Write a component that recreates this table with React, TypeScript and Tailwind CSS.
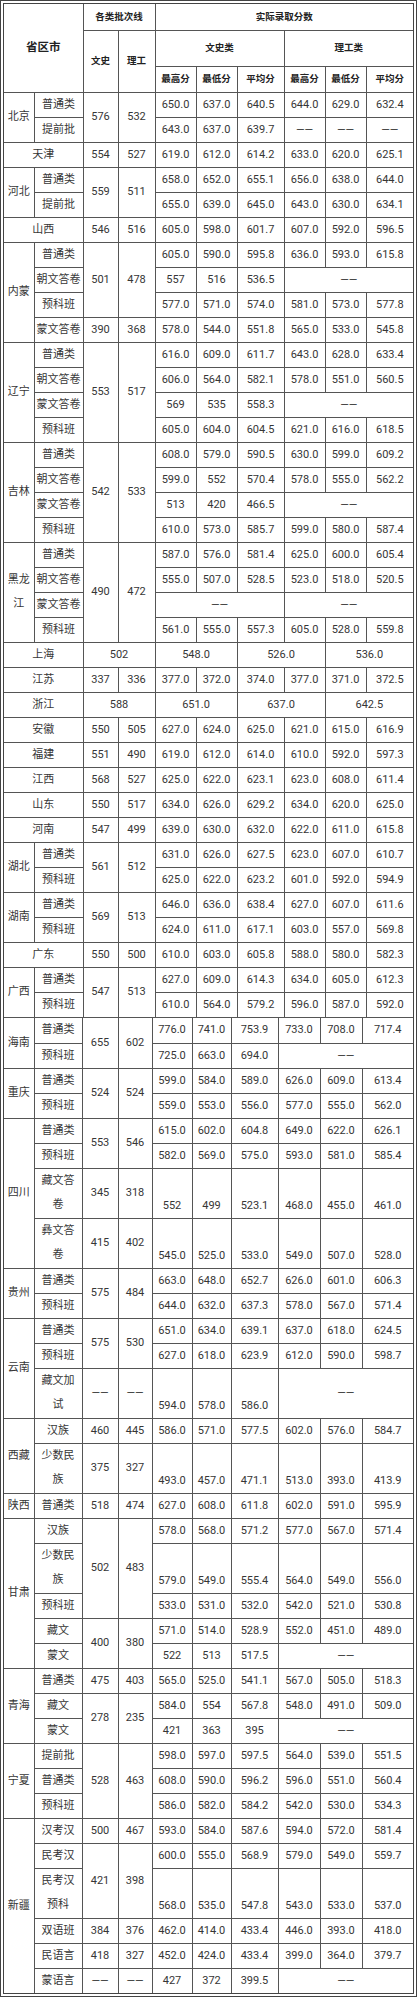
import React from 'react';

type Cell = string | { t: React.ReactNode; cs?: number; rs?: number; low?: boolean };
type Row = { c: Cell[]; tall?: boolean };

const D = '——';
const lo = (...ts: string[]): Cell[] => ts.map((t) => ({ t, low: true }));

const table1: Row[] = [
  { c: [{ t: '北京', rs: 2 }, '普通类', { t: '576', rs: 2 }, { t: '532', rs: 2 }, '650.0', '637.0', '640.5', '644.0', '629.0', '632.4'] },
  { c: ['提前批', '643.0', '637.0', '639.7', D, D, D] },
  { c: [{ t: '天津', cs: 2 }, '554', '527', '619.0', '612.0', '614.2', '633.0', '620.0', '625.1'] },
  { c: [{ t: '河北', rs: 2 }, '普通类', { t: '559', rs: 2 }, { t: '511', rs: 2 }, '658.0', '652.0', '655.1', '656.0', '638.0', '644.0'] },
  { c: ['提前批', '655.0', '639.0', '645.0', '643.0', '630.0', '634.1'] },
  { c: [{ t: '山西', cs: 2 }, '546', '516', '605.0', '598.0', '601.7', '607.0', '592.0', '596.5'] },
  { c: [{ t: '内蒙', rs: 4 }, '普通类', { t: '501', rs: 3 }, { t: '478', rs: 3 }, '605.0', '590.0', '595.8', '636.0', '593.0', '615.8'] },
  { c: ['朝文答卷', '557', '516', '536.5', { t: D, cs: 3 }] },
  { c: ['预科班', '577.0', '571.0', '574.0', '581.0', '573.0', '577.8'] },
  { c: ['蒙文答卷', '390', '368', '578.0', '544.0', '551.8', '565.0', '533.0', '545.8'] },
  { c: [{ t: '辽宁', rs: 4 }, '普通类', { t: '553', rs: 4 }, { t: '517', rs: 4 }, '616.0', '609.0', '611.7', '643.0', '628.0', '633.4'] },
  { c: ['朝文答卷', '606.0', '564.0', '582.1', '578.0', '551.0', '560.5'] },
  { c: ['蒙文答卷', '569', '535', '558.3', { t: D, cs: 3 }] },
  { c: ['预科班', '605.0', '604.0', '604.5', '621.0', '616.0', '618.5'] },
  { c: [{ t: '吉林', rs: 4 }, '普通类', { t: '542', rs: 4 }, { t: '533', rs: 4 }, '608.0', '579.0', '590.5', '630.0', '599.0', '609.2'] },
  { c: ['朝文答卷', '599.0', '552', '570.4', '578.0', '555.0', '562.2'] },
  { c: ['蒙文答卷', '513', '420', '466.5', { t: D, cs: 3 }] },
  { c: ['预科班', '610.0', '573.0', '585.7', '599.0', '580.0', '587.4'] },
  { c: [{ t: <>黑龙<br />江</>, rs: 4 }, '普通类', { t: '490', rs: 4 }, { t: '472', rs: 4 }, '587.0', '576.0', '581.4', '625.0', '600.0', '605.4'] },
  { c: ['朝文答卷', '555.0', '507.0', '528.5', '523.0', '518.0', '520.5'] },
  { c: ['蒙文答卷', { t: D, cs: 3 }, { t: D, cs: 3 }] },
  { c: ['预科班', '561.0', '555.0', '557.3', '605.0', '528.0', '559.8'] },
  { c: [{ t: '上海', cs: 2 }, { t: '502', cs: 2 }, { t: '548.0', cs: 2 }, { t: '526.0', cs: 2 }, { t: '536.0', cs: 2 }] },
  { c: [{ t: '江苏', cs: 2 }, '337', '336', '377.0', '372.0', '374.0', '377.0', '371.0', '372.5'] },
  { c: [{ t: '浙江', cs: 2 }, { t: '588', cs: 2 }, { t: '651.0', cs: 2 }, { t: '637.0', cs: 2 }, { t: '642.5', cs: 2 }] },
  { c: [{ t: '安徽', cs: 2 }, '550', '505', '627.0', '624.0', '625.0', '621.0', '615.0', '616.9'] },
  { c: [{ t: '福建', cs: 2 }, '551', '490', '619.0', '612.0', '614.0', '610.0', '592.0', '597.3'] },
  { c: [{ t: '江西', cs: 2 }, '568', '527', '625.0', '622.0', '623.1', '623.0', '608.0', '611.4'] },
  { c: [{ t: '山东', cs: 2 }, '550', '517', '634.0', '626.0', '629.2', '634.0', '620.0', '625.0'] },
  { c: [{ t: '河南', cs: 2 }, '547', '499', '639.0', '630.0', '632.0', '622.0', '611.0', '615.8'] },
  { c: [{ t: '湖北', rs: 2 }, '普通类', { t: '561', rs: 2 }, { t: '512', rs: 2 }, '631.0', '626.0', '627.5', '623.0', '607.0', '610.7'] },
  { c: ['预科班', '625.0', '622.0', '623.2', '601.0', '592.0', '594.9'] },
  { c: [{ t: '湖南', rs: 2 }, '普通类', { t: '569', rs: 2 }, { t: '513', rs: 2 }, '646.0', '636.0', '638.4', '627.0', '607.0', '611.6'] },
  { c: ['预科班', '624.0', '611.0', '617.1', '603.0', '557.0', '569.8'] },
  { c: [{ t: '广东', cs: 2 }, '550', '500', '610.0', '603.0', '605.8', '588.0', '580.0', '582.3'] },
  { c: [{ t: '广西', rs: 2 }, '普通类', { t: '547', rs: 2 }, { t: '513', rs: 2 }, '627.0', '609.0', '614.3', '634.0', '605.0', '612.3'] },
  { c: ['预科班', '610.0', '564.0', '579.2', '596.0', '587.0', '592.0'] },
];

const table2: Row[] = [
  { c: [{ t: '海南', rs: 2 }, '普通类', { t: '655', rs: 2 }, { t: '602', rs: 2 }, '776.0', '741.0', '753.9', '733.0', '708.0', '717.4'] },
  { c: ['预科班', '725.0', '663.0', '694.0', { t: D, cs: 3 }] },
  { c: [{ t: '重庆', rs: 2 }, '普通类', { t: '524', rs: 2 }, { t: '524', rs: 2 }, '599.0', '584.0', '589.0', '626.0', '609.0', '613.4'] },
  { c: ['预科班', '559.0', '553.0', '556.0', '577.0', '555.0', '562.0'] },
  { c: [{ t: '四川', rs: 4 }, '普通类', { t: '553', rs: 2 }, { t: '546', rs: 2 }, '615.0', '602.0', '604.8', '649.0', '622.0', '626.1'] },
  { c: ['预科班', '582.0', '569.0', '575.0', '593.0', '581.0', '585.4'] },
  { tall: true, c: [{ t: <>藏文答<br />卷</> }, '345', '318', ...lo('552', '499', '523.1', '468.0', '455.0', '461.0')] },
  { tall: true, c: [{ t: <>彝文答<br />卷</> }, '415', '402', ...lo('545.0', '525.0', '533.0', '549.0', '507.0', '528.0')] },
  { c: [{ t: '贵州', rs: 2 }, '普通类', { t: '575', rs: 2 }, { t: '484', rs: 2 }, '663.0', '648.0', '652.7', '626.0', '601.0', '606.3'] },
  { c: ['预科班', '644.0', '632.0', '637.3', '578.0', '567.0', '571.4'] },
  { c: [{ t: '云南', rs: 3 }, '普通类', { t: '575', rs: 2 }, { t: '530', rs: 2 }, '651.0', '634.0', '639.1', '637.0', '618.0', '624.5'] },
  { c: ['预科班', '627.0', '618.0', '623.9', '612.0', '590.0', '598.7'] },
  { tall: true, c: [{ t: <>藏文加<br />试</> }, D, D, ...lo('594.0', '578.0', '586.0'), { t: D, cs: 3 }] },
  { c: [{ t: '西藏', rs: 2 }, '汉族', '460', '445', '586.0', '571.0', '577.5', '602.0', '576.0', '584.7'] },
  { tall: true, c: [{ t: <>少数民<br />族</> }, '375', '327', ...lo('493.0', '457.0', '471.1', '513.0', '393.0', '413.9')] },
  { c: ['陕西', '普通类', '518', '474', '627.0', '608.0', '611.8', '602.0', '591.0', '595.9'] },
  { c: [{ t: '甘肃', rs: 5 }, '汉族', { t: '502', rs: 3 }, { t: '483', rs: 3 }, '578.0', '568.0', '571.2', '577.0', '567.0', '571.4'] },
  { tall: true, c: [{ t: <>少数民<br />族</> }, ...lo('579.0', '549.0', '555.4', '564.0', '549.0', '556.0')] },
  { c: ['预科班', '533.0', '531.0', '532.0', '542.0', '521.0', '530.8'] },
  { c: ['藏文', { t: '400', rs: 2 }, { t: '380', rs: 2 }, '571.0', '514.0', '528.9', '552.0', '451.0', '489.0'] },
  { c: ['蒙文', '522', '513', '517.5', { t: D, cs: 3 }] },
  { c: [{ t: '青海', rs: 3 }, '普通类', '475', '403', '565.0', '525.0', '541.1', '567.0', '505.0', '518.3'] },
  { c: ['藏文', { t: '278', rs: 2 }, { t: '235', rs: 2 }, '584.0', '554', '567.8', '548.0', '491.0', '509.0'] },
  { c: ['蒙文', '421', '363', '395', { t: D, cs: 3 }] },
  { c: [{ t: '宁夏', rs: 3 }, '提前批', { t: '528', rs: 3 }, { t: '463', rs: 3 }, '598.0', '597.0', '597.5', '564.0', '539.0', '551.5'] },
  { c: ['普通类', '608.0', '590.0', '596.2', '596.0', '551.0', '560.4'] },
  { c: ['预科班', '586.0', '582.0', '584.2', '542.0', '530.0', '534.3'] },
  { c: [{ t: '新疆', rs: 6 }, '汉考汉', '500', '467', '593.0', '584.0', '587.6', '594.0', '572.0', '581.4'] },
  { c: ['民考汉', { t: '421', rs: 2 }, { t: '398', rs: 2 }, '600.0', '555.0', '568.9', '579.0', '549.0', '559.7'] },
  { tall: true, c: [{ t: <>民考汉<br />预科</> }, ...lo('568.0', '535.0', '547.8', '543.0', '533.0', '537.0')] },
  { c: ['双语班', '384', '376', '462.0', '414.0', '433.4', '446.0', '393.0', '418.0'] },
  { c: ['民语言', '418', '327', '452.0', '424.0', '433.4', '399.0', '364.0', '379.7'] },
  { c: ['蒙语言', D, D, '427', '372', '399.5', { t: D, cs: 3 }] },
];

const td = 'border border-[#555] p-0 text-center leading-6 whitespace-nowrap';

function Body({ rows }: { rows: Row[] }) {
  return (
    <tbody>
      {rows.map((row, i) => (
        <tr key={i} className={row.tall ? 'h-[50px]' : 'h-[25px]'}>
          {row.c.map((cell, j) => {
            const c = typeof cell === 'string' ? { t: cell } : cell;
            return (
              <td
                key={j}
                colSpan={c.cs}
                rowSpan={c.rs}
                className={`${td} ${c.low ? 'align-bottom' : 'align-middle'}`}
              >
                {c.t}
              </td>
            );
          })}
        </tr>
      ))}
    </tbody>
  );
}

const th = 'border border-[#555] p-0 text-center align-middle font-bold text-[#222] text-[9.5px] whitespace-nowrap';

export default function App() {
  return (
    <div
      className="w-[417px] bg-white text-[11px] text-[#363636]"
      style={{ fontFamily: 'Roboto, "Noto Sans CJK SC", sans-serif' }}
    >
      <div className="border-[4px] border-double border-[#444]">
        <table className="w-full table-fixed border-collapse border-hidden">
          <colgroup>
            <col className="w-[30px]" />
            <col className="w-[49px]" />
            <col className="w-[35px]" />
            <col className="w-[37px]" />
            <col className="w-[41px]" />
            <col className="w-[41px]" />
            <col className="w-[47px]" />
            <col className="w-[41px]" />
            <col className="w-[41px]" />
            <col className="w-[47px]" />
          </colgroup>
          <thead>
            <tr className="h-[26px]">
              <th rowSpan={3} colSpan={2} className={`${th} text-[11.5px]`}>省区市</th>
              <th colSpan={2} className={th}>各类批次线</th>
              <th colSpan={6} className={th}>实际录取分数</th>
            </tr>
            <tr className="h-[36px]">
              <th rowSpan={2} className={th}>文史</th>
              <th rowSpan={2} className={th}>理工</th>
              <th colSpan={3} className={th}>文史类</th>
              <th colSpan={3} className={th}>理工类</th>
            </tr>
            <tr className="h-[26px]">
              <th className={th}>最高分</th>
              <th className={th}>最低分</th>
              <th className={th}>平均分</th>
              <th className={th}>最高分</th>
              <th className={th}>最低分</th>
              <th className={th}>平均分</th>
            </tr>
          </thead>
          <Body rows={table1} />
        </table>
        <div className="border-t border-[#555]">
          <table className="w-full table-fixed border-collapse border-hidden">
            <colgroup>
              <col className="w-[30px]" />
              <col className="w-[48px]" />
              <col className="w-[36px]" />
              <col className="w-[34px]" />
              <col className="w-[40px]" />
              <col className="w-[39px]" />
              <col className="w-[47px]" />
              <col className="w-[42px]" />
              <col className="w-[42px]" />
              <col className="w-[51px]" />
            </colgroup>
            <Body rows={table2} />
          </table>
        </div>
      </div>
    </div>
  );
}
